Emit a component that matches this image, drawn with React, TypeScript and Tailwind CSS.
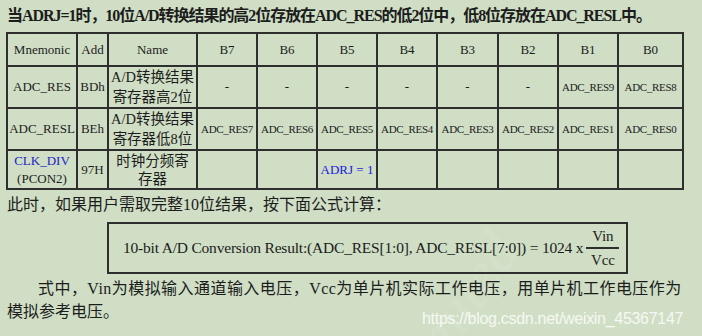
import React from "react";

const serif = { fontFamily: '"Liberation Serif", "Noto Sans CJK SC", serif' };

const cell = "border-2 border-[#2e2e2e] text-center align-middle p-0";

export default function App() {
  const bits = ["B7", "B6", "B5", "B4", "B3", "B2", "B1", "B0"];
  return (
    <div
      className="relative w-[702px] h-[336px] overflow-hidden bg-[#cfdec4] text-[#1c1c1c]"
      style={serif}
    >
      <div
        className="absolute left-[400px] top-[345px] text-[60px] italic text-white/10 -rotate-[55deg] origin-left"
        style={{ fontFamily: '"Liberation Serif", serif' }}
      >
        Limited
      </div>

      <div className="relative pl-[7px] pt-[6px] text-[16px] leading-[20px] font-semibold tracking-[-1.05px]">
        当ADRJ=1时，10位A/D转换结果的高2位存放在ADC_RES的低2位中，低8位存放在ADC_RESL中。
      </div>

      <table className="relative ml-[6px] mt-[6px] border-collapse table-fixed w-[676px]">
        <colgroup>
          <col className="w-[70px]" />
          <col className="w-[31px]" />
          <col className="w-[89px]" />
          <col className="w-[60px]" />
          <col className="w-[60px]" />
          <col className="w-[60px]" />
          <col className="w-[60px]" />
          <col className="w-[61px]" />
          <col className="w-[60px]" />
          <col className="w-[60px]" />
          <col className="w-[65px]" />
        </colgroup>
        <tbody>
          <tr className="h-[33px] text-[13px]">
            <td className={cell}>Mnemonic</td>
            <td className={cell}>Add</td>
            <td className={cell}>Name</td>
            {bits.map((b) => (
              <td key={b} className={cell}>
                {b}
              </td>
            ))}
          </tr>
          <tr className="h-[41px] text-[13px]">
            <td className={cell}>ADC_RES</td>
            <td className={cell}>BDh</td>
            <td className={`${cell} text-[14.5px] leading-[20px]`}>
              A/D转换结果
              <br />
              寄存器高2位
            </td>
            {["-", "-", "-", "-", "-", "-"].map((v, i) => (
              <td key={i} className={cell}>
                {v}
              </td>
            ))}
            <td className={`${cell} text-[11px] tracking-[-0.3px]`}>ADC_RES9</td>
            <td className={`${cell} text-[11px] tracking-[-0.3px]`}>ADC_RES8</td>
          </tr>
          <tr className="h-[40px] text-[13px]">
            <td className={cell}>ADC_RESL</td>
            <td className={cell}>BEh</td>
            <td className={`${cell} text-[14.5px] leading-[20px]`}>
              A/D转换结果
              <br />
              寄存器低8位
            </td>
            {[7, 6, 5, 4, 3, 2, 1, 0].map((n) => (
              <td key={n} className={`${cell} text-[11px] tracking-[-0.3px]`}>
                ADC_RES{n}
              </td>
            ))}
          </tr>
          <tr className="h-[37px] text-[13px]">
            <td className={`${cell} leading-[18px]`}>
              <span className="text-[#2323c8]">CLK_DIV</span>
              <br />
              (PCON2)
            </td>
            <td className={cell}>97H</td>
            <td className={`${cell} text-[14.5px] leading-[18px] align-top pt-[1px]`}>
              时钟分频寄
              <br />
              存器
            </td>
            <td className={cell}></td>
            <td className={cell}></td>
            <td className={`${cell} text-[#1a1ae0]`}>ADRJ = 1</td>
            <td className={cell}></td>
            <td className={cell}></td>
            <td className={cell}></td>
            <td className={cell}></td>
            <td className={cell}></td>
          </tr>
        </tbody>
      </table>

      <div className="relative pl-[7px] mt-[5px] text-[16px] leading-[20px]">
        此时，如果用户需取完整10位结果，按下面公式计算：
      </div>

      <div className="relative ml-[107px] mt-[7px] w-[521px] h-[52px] border-2 border-[#2e2e2e] flex items-center pl-[14px] text-[15.5px] tracking-[-0.2px]">
        <span>10-bit A/D Conversion Result:(ADC_RES[1:0], ADC_RESL[7:0]) = 1024 x</span>
        <span className="ml-[3px] flex flex-col items-center text-[15px] leading-[15px]">
          <span className="px-[6px] pb-[3px] border-b-2 border-[#2e2e2e]">Vin</span>
          <span className="pt-[4px]">Vcc</span>
        </span>
      </div>

      <div className="relative px-[7px] mt-[3px] text-[16px] leading-[23px]">
        <div className="pl-[31px] tracking-[0.45px]">
          式中，Vin为模拟输入通道输入电压，Vcc为单片机实际工作电压，用单片机工作电压作为
        </div>
        <div>模拟参考电压。</div>
      </div>

      <div
        className="absolute left-[422px] top-[307px] text-[16px] text-white/80 tracking-[-0.3px]"
        style={{ fontFamily: '"Liberation Sans", Arial, sans-serif' }}
      >
        https://blog.csdn.net/weixin_45367147
      </div>
    </div>
  );
}
